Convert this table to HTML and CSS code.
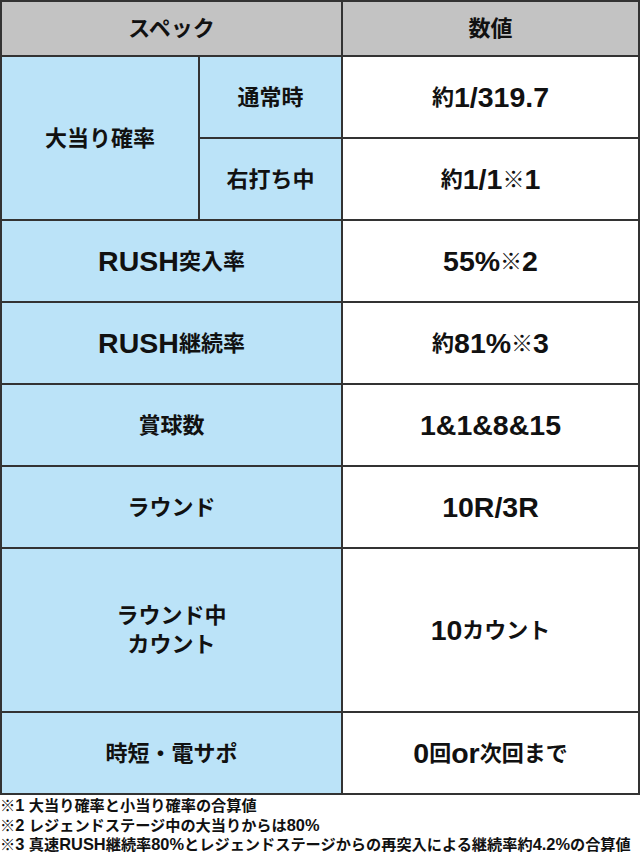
FILE: index.html
```html
<!DOCTYPE html>
<html lang="ja">
<head>
<meta charset="utf-8">
<link rel="stylesheet" href="styles.css">
</head>
<body>
<div class="spec">
  <div class="cell head span2">スペック</div>
  <div class="cell head">数値</div>

  <div class="cell label tall">大当り確率</div>
  <div class="cell label">通常時</div>
  <div class="cell value">約<span class="n">1/319.7</span></div>
  <div class="cell label">右打ち中</div>
  <div class="cell value">約<span class="n">1/1</span>※<span class="n">1</span></div>

  <div class="cell label span2"><span class="n">RUSH</span>突入率</div>
  <div class="cell value"><span class="n">55%</span>※<span class="n">2</span></div>

  <div class="cell label span2"><span class="n">RUSH</span>継続率</div>
  <div class="cell value">約<span class="n">81%</span>※<span class="n">3</span></div>

  <div class="cell label span2">賞球数</div>
  <div class="cell value"><span class="n">1&amp;1&amp;8&amp;15</span></div>

  <div class="cell label span2">ラウンド</div>
  <div class="cell value"><span class="n">10R/3R</span></div>

  <div class="cell label span2">ラウンド中<br>カウント</div>
  <div class="cell value"><span class="n">10</span>カウント</div>

  <div class="cell label span2">時短・電サポ</div>
  <div class="cell value"><span class="n">0</span>回<span class="n">or</span>次回まで</div>
</div>
<div class="notes">
  <p>※<span class="n">1 </span>大当り確率と小当り確率の合算値</p>
  <p>※<span class="n">2 </span>レジェンドステージ中の大当りからは<span class="n">80%</span></p>
  <p>※<span class="n">3 </span>真速<span class="n">RUSH</span>継続率<span class="n">80%</span>とレジェンドステージからの再突入による継続率約<span class="n">4.2%</span>の合算値</p>
</div>
</body>
</html>
```

FILE: styles.css
```css
html, body {
  margin: 0;
  padding: 0;
  background: #ffffff;
}
body {
  width: 640px;
  font-family: "Liberation Sans", "Noto Sans CJK JP", sans-serif;
  font-weight: bold;
  color: #111;
}
.spec {
  display: grid;
  grid-template-columns: 196px 141px 295px;
  grid-template-rows: 53px 80px 80px 80px 80px 80px 80px 162px 80px;
  gap: 2px;
  padding: 2px;
  background: #333;
  width: 640px;
  box-sizing: border-box;
}
.cell {
  display: flex;
  align-items: center;
  justify-content: center;
  flex-wrap: wrap;
  text-align: center;
  font-size: 22px;
  line-height: 29px;
}
.cell .n {
  font-size: 28.5px;
  line-height: 29px;
}
.head {
  background: #c3c3c3;
}
.label {
  background: #bbe3f8;
}
.value {
  background: #ffffff;
}
.span2 {
  grid-column: span 2;
}
.tall {
  grid-row: span 2;
}
.notes {
  padding-top: 1px;
}
.notes p {
  margin: 0;
  font-size: 15.2px;
  line-height: 18.5px;
  white-space: nowrap;
}
.notes .n {
  font-size: 16.4px;
}
```
